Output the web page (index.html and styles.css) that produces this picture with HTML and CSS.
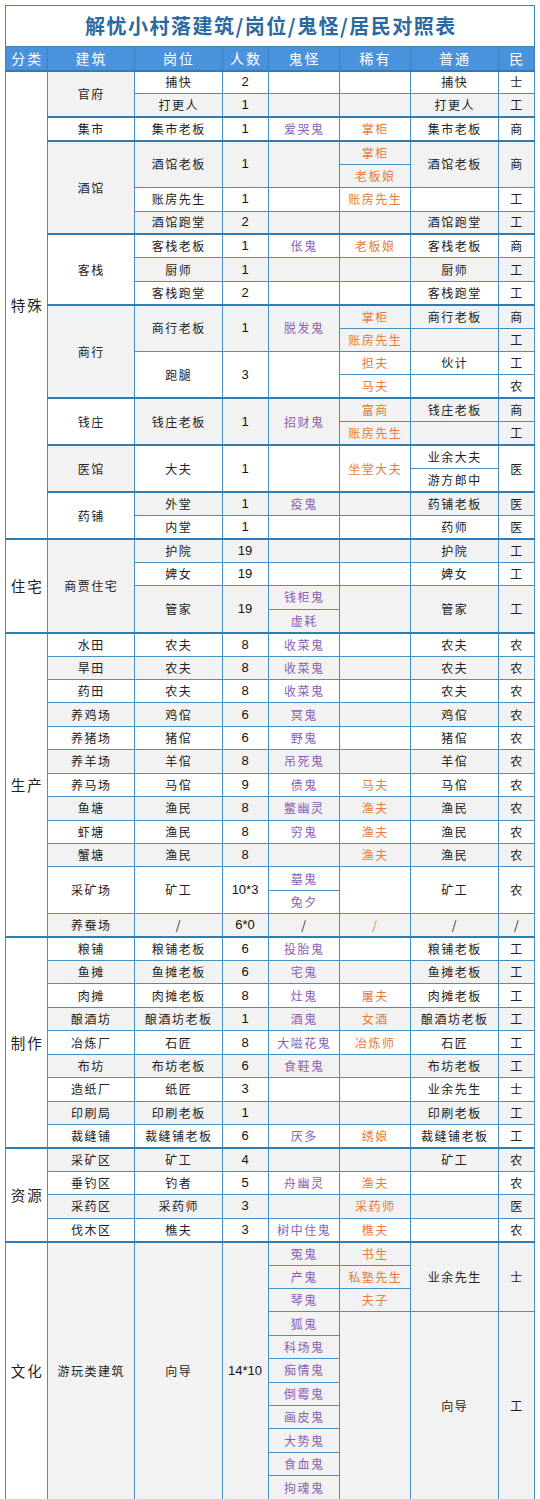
FILE: index.html
```html
<!DOCTYPE html>
<html lang="zh-CN">
<head>
<meta charset="utf-8">
<title>解忧小村落建筑/岗位/鬼怪/居民对照表</title>
<link rel="stylesheet" href="styles.css">
</head>
<body>
<table class="sheet">
<colgroup>
<col class="c-cat"><col class="c-bld"><col class="c-job"><col class="c-num"><col class="c-ghost"><col class="c-rare"><col class="c-norm"><col class="c-res">
</colgroup>
<thead>
<tr class="title"><th colspan="8">解忧小村落建筑/岗位/鬼怪/居民对照表</th></tr>
<tr class="head"><th>分类</th><th>建筑</th><th>岗位</th><th>人数</th><th>鬼怪</th><th>稀有</th><th>普通</th><th>民</th></tr>
</thead>
<tbody>
<tr class="w sep"><td class="cat" rowspan="20">特殊</td><td class="bg" rowspan="2">官府</td><td>捕快</td><td class="n">2</td><td></td><td></td><td>捕快</td><td>士</td></tr>
<tr class="g"><td>打更人</td><td class="n">1</td><td></td><td></td><td>打更人</td><td>工</td></tr>
<tr class="w sep"><td class="bw">集市</td><td>集市老板</td><td class="n">1</td><td class="gh">爱哭鬼</td><td class="ra">掌柜</td><td>集市老板</td><td>商</td></tr>
<tr class="g sep"><td class="bg" rowspan="4">酒馆</td><td rowspan="2">酒馆老板</td><td class="n" rowspan="2">1</td><td rowspan="2"></td><td class="ra">掌柜</td><td rowspan="2">酒馆老板</td><td rowspan="2">商</td></tr>
<tr class="g"><td class="ra">老板娘</td></tr>
<tr class="w"><td>账房先生</td><td class="n">1</td><td></td><td class="ra">账房先生</td><td></td><td>工</td></tr>
<tr class="g"><td>酒馆跑堂</td><td class="n">2</td><td></td><td></td><td>酒馆跑堂</td><td>工</td></tr>
<tr class="w sep"><td class="bw" rowspan="3">客栈</td><td>客栈老板</td><td class="n">1</td><td class="gh">伥鬼</td><td class="ra">老板娘</td><td>客栈老板</td><td>商</td></tr>
<tr class="g"><td>厨师</td><td class="n">1</td><td></td><td></td><td>厨师</td><td>工</td></tr>
<tr class="w"><td>客栈跑堂</td><td class="n">2</td><td></td><td></td><td>客栈跑堂</td><td>工</td></tr>
<tr class="g sep"><td class="bg" rowspan="4">商行</td><td rowspan="2">商行老板</td><td class="n" rowspan="2">1</td><td class="gh" rowspan="2">脱发鬼</td><td class="ra">掌柜</td><td>商行老板</td><td>商</td></tr>
<tr class="g"><td class="ra">账房先生</td><td></td><td>工</td></tr>
<tr class="w"><td rowspan="2">跑腿</td><td class="n" rowspan="2">3</td><td rowspan="2"></td><td class="ra">担夫</td><td>伙计</td><td>工</td></tr>
<tr class="w"><td class="ra">马夫</td><td></td><td>农</td></tr>
<tr class="g sep"><td class="bw" rowspan="2">钱庄</td><td rowspan="2">钱庄老板</td><td class="n" rowspan="2">1</td><td class="gh" rowspan="2">招财鬼</td><td class="ra">富商</td><td>钱庄老板</td><td>商</td></tr>
<tr class="g"><td class="ra">账房先生</td><td></td><td>工</td></tr>
<tr class="w sep"><td class="bg" rowspan="2">医馆</td><td rowspan="2">大夫</td><td class="n" rowspan="2">1</td><td rowspan="2"></td><td class="ra" rowspan="2">坐堂大夫</td><td>业余大夫</td><td rowspan="2">医</td></tr>
<tr class="w"><td>游方郎中</td></tr>
<tr class="g sep"><td class="bw" rowspan="2">药铺</td><td>外堂</td><td class="n">1</td><td class="gh">疫鬼</td><td></td><td>药铺老板</td><td>医</td></tr>
<tr class="w"><td>内堂</td><td class="n">1</td><td></td><td></td><td>药师</td><td>医</td></tr>

<tr class="g sep"><td class="cat" rowspan="4">住宅</td><td class="bg" rowspan="4">商贾住宅</td><td>护院</td><td class="n">19</td><td></td><td></td><td>护院</td><td>工</td></tr>
<tr class="w"><td>婢女</td><td class="n">19</td><td></td><td></td><td>婢女</td><td>工</td></tr>
<tr class="g"><td rowspan="2">管家</td><td class="n" rowspan="2">19</td><td class="gh">钱柜鬼</td><td rowspan="2"></td><td rowspan="2">管家</td><td rowspan="2">工</td></tr>
<tr class="g"><td class="gh">虚耗</td></tr>

<tr class="w sep"><td class="cat" rowspan="13">生产</td><td>水田</td><td>农夫</td><td class="n">8</td><td class="gh">收菜鬼</td><td></td><td>农夫</td><td>农</td></tr>
<tr class="g"><td>旱田</td><td>农夫</td><td class="n">8</td><td class="gh">收菜鬼</td><td></td><td>农夫</td><td>农</td></tr>
<tr class="w"><td>药田</td><td>农夫</td><td class="n">8</td><td class="gh">收菜鬼</td><td></td><td>农夫</td><td>农</td></tr>
<tr class="g"><td>养鸡场</td><td>鸡倌</td><td class="n">6</td><td class="gh">冥鬼</td><td></td><td>鸡倌</td><td>农</td></tr>
<tr class="w"><td>养猪场</td><td>猪倌</td><td class="n">6</td><td class="gh">野鬼</td><td></td><td>猪倌</td><td>农</td></tr>
<tr class="g"><td>养羊场</td><td>羊倌</td><td class="n">8</td><td class="gh">吊死鬼</td><td></td><td>羊倌</td><td>农</td></tr>
<tr class="w"><td>养马场</td><td>马倌</td><td class="n">9</td><td class="gh">债鬼</td><td class="ra">马夫</td><td>马倌</td><td>农</td></tr>
<tr class="g"><td>鱼塘</td><td>渔民</td><td class="n">8</td><td class="gh">鳖幽灵</td><td class="ra">渔夫</td><td>渔民</td><td>农</td></tr>
<tr class="w"><td>虾塘</td><td>渔民</td><td class="n">8</td><td class="gh">穷鬼</td><td class="ra">渔夫</td><td>渔民</td><td>农</td></tr>
<tr class="g"><td>蟹塘</td><td>渔民</td><td class="n">8</td><td></td><td class="ra">渔夫</td><td>渔民</td><td>农</td></tr>
<tr class="w"><td rowspan="2">采矿场</td><td rowspan="2">矿工</td><td class="n" rowspan="2">10*3</td><td class="gh">墓鬼</td><td rowspan="2"></td><td rowspan="2">矿工</td><td rowspan="2">农</td></tr>
<tr class="w"><td class="gh">兔夕</td></tr>
<tr class="g"><td>养蚕场</td><td>/</td><td class="n">6*0</td><td>/</td><td class="ra">/</td><td>/</td><td>/</td></tr>

<tr class="w sep"><td class="cat" rowspan="9">制作</td><td>粮铺</td><td>粮铺老板</td><td class="n">6</td><td class="gh">投胎鬼</td><td></td><td>粮铺老板</td><td>工</td></tr>
<tr class="g"><td>鱼摊</td><td>鱼摊老板</td><td class="n">6</td><td class="gh">宅鬼</td><td></td><td>鱼摊老板</td><td>工</td></tr>
<tr class="w"><td>肉摊</td><td>肉摊老板</td><td class="n">8</td><td class="gh">灶鬼</td><td class="ra">屠夫</td><td>肉摊老板</td><td>工</td></tr>
<tr class="g"><td>酿酒坊</td><td>酿酒坊老板</td><td class="n">1</td><td class="gh">酒鬼</td><td class="ra">女酒</td><td>酿酒坊老板</td><td>工</td></tr>
<tr class="w"><td>冶炼厂</td><td>石匠</td><td class="n">8</td><td class="gh">大嗞花鬼</td><td class="ra">冶炼师</td><td>石匠</td><td>工</td></tr>
<tr class="g"><td>布坊</td><td>布坊老板</td><td class="n">6</td><td class="gh">食鞋鬼</td><td></td><td>布坊老板</td><td>工</td></tr>
<tr class="w"><td>造纸厂</td><td>纸匠</td><td class="n">3</td><td></td><td></td><td>业余先生</td><td>士</td></tr>
<tr class="g"><td>印刷局</td><td>印刷老板</td><td class="n">1</td><td></td><td></td><td>印刷老板</td><td>工</td></tr>
<tr class="w"><td>裁缝铺</td><td>裁缝铺老板</td><td class="n">6</td><td class="gh">厌多</td><td class="ra">绣娘</td><td>裁缝铺老板</td><td>工</td></tr>

<tr class="g sep"><td class="cat" rowspan="4">资源</td><td>采矿区</td><td>矿工</td><td class="n">4</td><td></td><td></td><td>矿工</td><td>农</td></tr>
<tr class="w"><td>垂钓区</td><td>钓者</td><td class="n">5</td><td class="gh">舟幽灵</td><td class="ra">渔夫</td><td></td><td>农</td></tr>
<tr class="g"><td>采药区</td><td>采药师</td><td class="n">3</td><td></td><td class="ra">采药师</td><td></td><td>医</td></tr>
<tr class="w"><td>伐木区</td><td>樵夫</td><td class="n">3</td><td class="gh">树中住鬼</td><td class="ra">樵夫</td><td></td><td>农</td></tr>

<tr class="g sep"><td class="cat" rowspan="11">文化</td><td rowspan="11">游玩类建筑</td><td rowspan="11">向导</td><td class="n" rowspan="11">14*10</td><td class="gh">冤鬼</td><td class="ra">书生</td><td rowspan="3">业余先生</td><td rowspan="3">士</td></tr>
<tr class="g"><td class="gh">产鬼</td><td class="ra">私塾先生</td></tr>
<tr class="g"><td class="gh">琴鬼</td><td class="ra">夫子</td></tr>
<tr class="g"><td class="gh">狐鬼</td><td rowspan="8"></td><td rowspan="8">向导</td><td rowspan="8">工</td></tr>
<tr class="g"><td class="gh">科场鬼</td></tr>
<tr class="g"><td class="gh">痴情鬼</td></tr>
<tr class="g"><td class="gh">倒霉鬼</td></tr>
<tr class="g"><td class="gh">画皮鬼</td></tr>
<tr class="g"><td class="gh">大势鬼</td></tr>
<tr class="g"><td class="gh">食血鬼</td></tr>
<tr class="g"><td class="gh">拘魂鬼</td></tr>
</tbody>
</table>
</body>
</html>
```

FILE: styles.css
```css
html, body {
  margin: 0;
  background: #ffffff;
}

body {
  padding: 5px 0 0 5px;
  font-family: "Noto Sans CJK SC", "Noto Sans", sans-serif;
  color: #222222;
}

.sheet {
  border-collapse: collapse;
  table-layout: fixed;
  width: 529px;
}

.c-cat { width: 41.5px; }
.c-bld { width: 87px; }
.c-job { width: 88px; }
.c-num { width: 46px; }
.c-ghost { width: 71px; }
.c-rare { width: 71px; }
.c-norm { width: 88px; }
.c-res { width: 36.5px; }

.sheet th,
.sheet td {
  border: 1px solid #4690c2;
  padding: 0 0 0 1.5px;
  text-align: center;
  vertical-align: middle;
  font-size: 12px;
  line-height: 14px;
  letter-spacing: 1.5px;
  font-weight: 400;
  white-space: nowrap;
  overflow: hidden;
}

.title th {
  height: 39.5px;
  background: #ffffff;
  color: #2b6aa0;
  font-size: 20px;
  line-height: 24px;
  letter-spacing: 1.5px;
  font-weight: 700;
  border-color: #3a86bc;
}

.head th {
  height: 23px;
  background: #4a92dc;
  color: #ffffff;
  font-size: 14px;
  letter-spacing: 2px;
  padding-left: 2px;
  border-color: #3a80c4;
}

tbody tr {
  height: 23.43px;
}

tr.w > td { background: #ffffff; }
tr.g > td { background: #f2f2f2; }

tr.sep > td {
  border-top: 2px solid #2f7db5;
}

.sheet td.bg { background: #f2f2f2; }
.sheet td.bw { background: #ffffff; }

.sheet td.cat {
  background: #ffffff;
  font-size: 14.5px;
  letter-spacing: 2px;
  padding-left: 2px;
  color: #1e1e1e;
}

.sheet td.n {
  font-family: "Liberation Sans", Arial, sans-serif;
  font-size: 13px;
  letter-spacing: 0;
  padding-left: 0;
  color: #111111;
}

.sheet td.gh { color: #8a5fb6; }
.sheet td.ra { color: #e57c3b; }
```
